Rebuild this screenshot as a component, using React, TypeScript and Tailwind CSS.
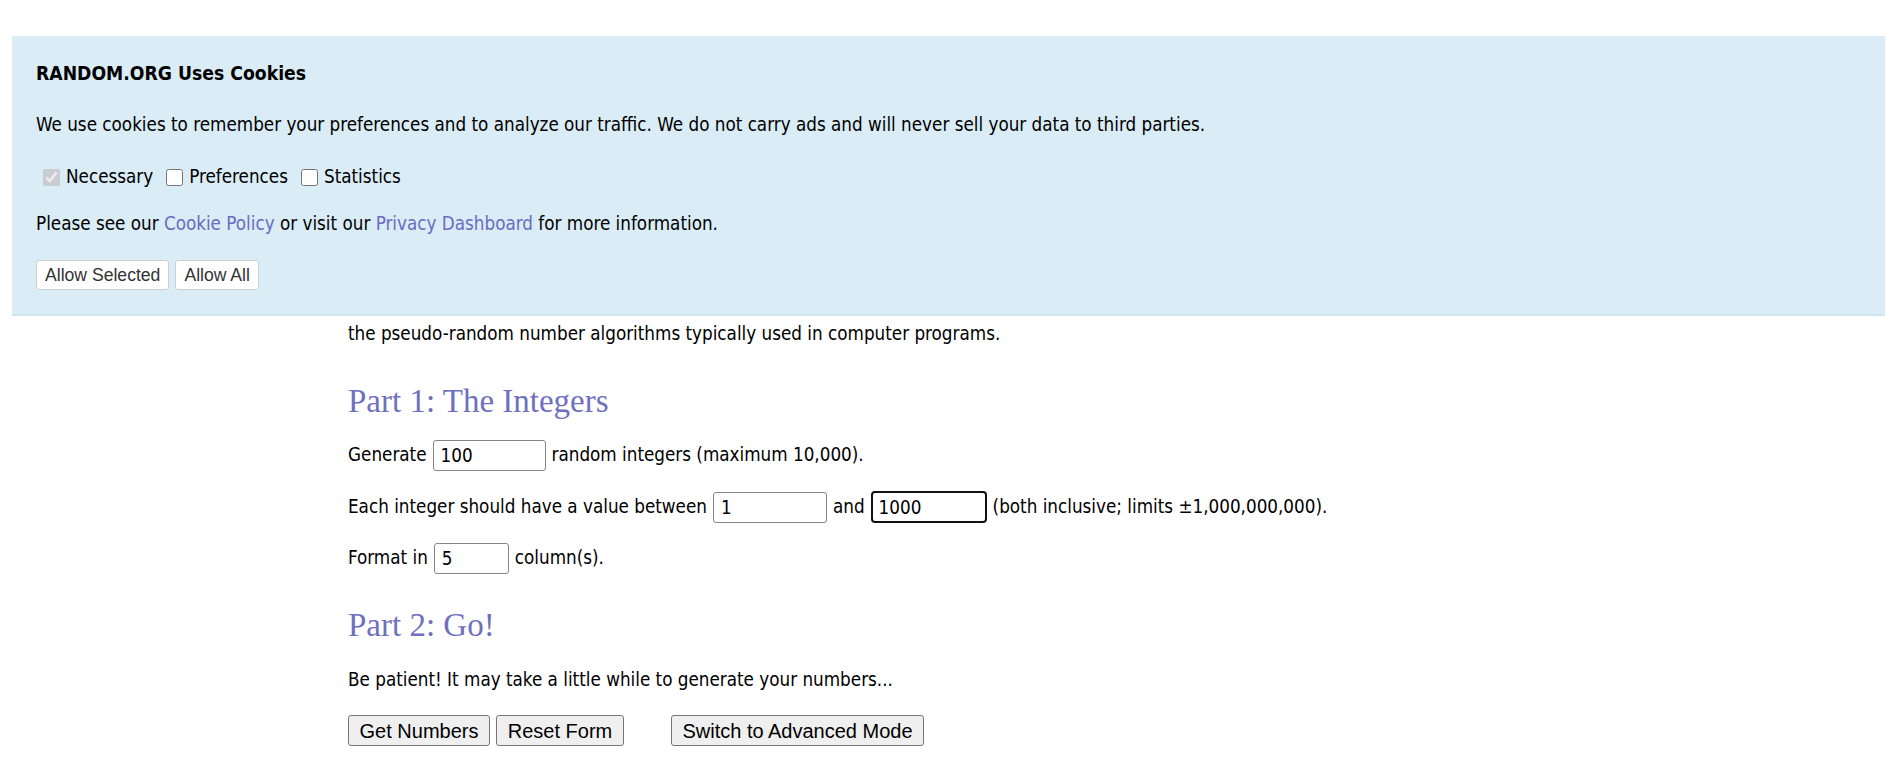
import { useState } from 'react';

const LINK = 'text-[#6b6bbf] no-underline';

function Check({ label, checked, disabled, first }: { label: string; checked?: boolean; disabled?: boolean; first?: boolean }) {
  return (
    <label className={first ? 'flex items-center ml-[7px]' : 'flex items-center ml-[13px]'}>
      <input type="checkbox" defaultChecked={checked} disabled={disabled} className="w-[17px] h-[17px] m-0 mr-[6px]" />
      <span>{label}</span>
    </label>
  );
}

function NumInput({ value, width, focused }: { value: string; width: string; focused?: boolean }) {
  return (
    <input
      defaultValue={value}
      className={
        focused
          ? `${width} h-[32px] mx-[6px] px-[6px] border-2 border-[#111] rounded-[4px] bg-white outline-none`
          : `${width} h-[31px] mx-[6px] px-[7px] border border-[#858585] rounded-[3px] bg-white outline-none`
      }
    />
  );
}

export default function App() {
  const [mode] = useState('simple');

  return (
    <div className="min-h-[765px] bg-white text-black pt-9 font-['DejaVu_Sans_Condensed','Liberation_Sans',sans-serif] text-[18.7px]">
      {/* cookie banner */}
      <div className="ml-3 mr-[5px] bg-[#daecf6] border-b-2 border-[#cde7f2] px-6 pt-[26px] pb-6">
        <h1 className="font-bold leading-6 text-[19.2px]">RANDOM.ORG Uses Cookies</h1>
        <p className="mt-[27px] leading-6">
          We use cookies to remember your preferences and to analyze our traffic. We do not carry ads and will never sell your data to third parties.
        </p>
        <div className="mt-[28px] flex items-center h-6">
          <Check label="Necessary" checked disabled first />
          <Check label="Preferences" />
          <Check label="Statistics" />
        </div>
        <p className="mt-[23px] leading-6">
          Please see our <a href="#" className={LINK}>Cookie Policy</a> or visit our{' '}
          <a href="#" className={LINK}>Privacy Dashboard</a> for more information.
        </p>
        <div className="mt-[24px] flex gap-[6px] font-['Liberation_Sans',Arial,sans-serif] text-[17.6px] text-[#333]">
          <button className="h-[30px] px-2 bg-white border border-[#cfcfcf] rounded-[3px]">Allow Selected</button>
          <button className="h-[30px] px-2 bg-white border border-[#cfcfcf] rounded-[3px]">Allow All</button>
        </div>
      </div>

      {/* generator form */}
      <main className="pl-[348px]">
        <p className="mt-[6px] leading-6">the pseudo-random number algorithms typically used in computer programs.</p>

        <h2 className="mt-[35px] leading-10 font-['Liberation_Serif',Georgia,serif] text-[33px] text-[#7070c0]">Part 1: The Integers</h2>

        <div className="mt-[18px] flex items-center h-8">
          <span>Generate</span>
          <NumInput value="100" width="w-[113px]" />
          <span>random integers (maximum 10,000).</span>
        </div>

        <div className="mt-[20px] flex items-center h-8">
          <span>Each integer should have a value between</span>
          <NumInput value="1" width="w-[114px]" />
          <span>and</span>
          <NumInput value="1000" width="w-[116px]" focused />
          <span>(both inclusive; limits ±1,000,000,000).</span>
        </div>

        <div className="mt-[19px] flex items-center h-8">
          <span>Format in</span>
          <NumInput value="5" width="w-[75px]" />
          <span>column(s).</span>
        </div>

        <h2 className="mt-[31px] leading-10 font-['Liberation_Serif',Georgia,serif] text-[33px] text-[#7070c0]">Part 2: Go!</h2>

        <p className="mt-[23px] leading-6">Be patient! It may take a little while to generate your numbers...</p>

        <div className="mt-[23px] flex items-center font-['Liberation_Sans',Arial,sans-serif] text-[20px]" data-mode={mode}>
          <button className="h-[31px] w-[142px] bg-[#efefef] border border-[#767676] rounded-[3px]">Get Numbers</button>
          <button className="ml-[6px] h-[31px] w-[128px] bg-[#efefef] border border-[#767676] rounded-[3px]">Reset Form</button>
          <button className="ml-[47px] h-[31px] w-[253px] bg-[#efefef] border border-[#767676] rounded-[3px]">Switch to Advanced Mode</button>
        </div>
      </main>
    </div>
  );
}
